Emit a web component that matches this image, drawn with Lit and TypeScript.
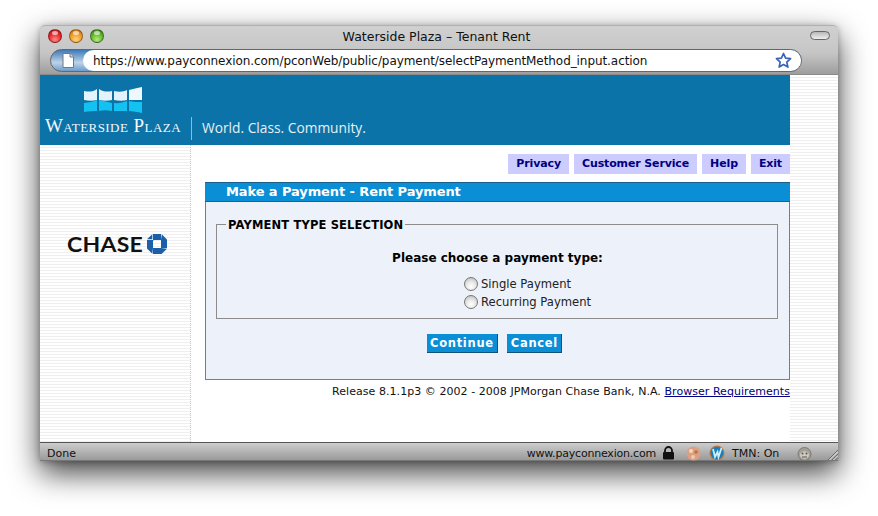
import { LitElement, html, css } from "lit";
import { customElement } from "lit/decorators.js";

const stripes = css`repeating-linear-gradient(180deg,#ffffff 0 2px,#efefef 2px 3px)`;

@customElement("app-root")
export class AppRoot extends LitElement {
  static styles = css`
    :host { display:block; width:878px; height:516px; background:#fff; overflow:hidden;
      font-family:"DejaVu Sans",sans-serif; color:#000; }
    .stage { padding:25px 40px 55px; box-sizing:border-box; height:516px; }
    .window { height:436px; display:flex; flex-direction:column; border-radius:5px 5px 0 0;
      box-shadow:0 12px 30px rgba(0,0,0,.75), 0 1px 6px rgba(0,0,0,.25); }
    .chrome { height:50px; flex:none; box-sizing:border-box; position:relative; border-radius:5px 5px 0 0;
      background:linear-gradient(180deg,#d0d0d0 0,#c8c8c8 22px,#c4c4c4 28px,#9c9c9c 49px);
      border-top:1px solid #b0b0b0; border-bottom:1px solid #8a8a8a; padding-top:1px; }
    .titlerow { height:18px; display:flex; align-items:center; padding:0 8px; position:relative; }
    .lights { display:flex; gap:7px; }
    .light { width:14px; height:14px; border-radius:50%; box-sizing:border-box; border:1px solid rgba(0,0,0,.35); position:relative; }
    .light::after { content:""; position:absolute; left:3px; right:3px; top:1px; height:4px; border-radius:50%; background:rgba(255,255,255,.6); }
    .red { background:radial-gradient(circle at 50% 80%,#ff8a80 0,#e8262c 55%,#a81a20 100%); }
    .amber { background:radial-gradient(circle at 50% 80%,#ffd27a 0,#ef9a26 55%,#b86a14 100%); }
    .green { background:radial-gradient(circle at 50% 80%,#b5ec78 0,#5fb52c 55%,#3c7f1c 100%); }
    .hidden { visibility:hidden; }
    .title { flex:1; text-align:center; font-size:12.5px; color:#111; padding-right:5px; }
    .pill { position:absolute; right:8px; top:4px; width:20px; height:9px; box-sizing:border-box; border-radius:5px; border:1px solid #666;
      background:linear-gradient(180deg,#b8b8b8,#eeeeee); }
    .urlrow { margin:4px 36px 0 10px; height:23px; display:flex; position:relative; border-radius:12px;
      background:linear-gradient(180deg,#3f79b8,#bcd3ea 60%,#6d9ccb); border:1px solid #666; box-sizing:border-box; }
    .page { width:32px; flex:none; display:flex; align-items:center; justify-content:center; padding-left:2px; box-sizing:border-box; }
    .field { flex:1; background:#fff; border-radius:11px; display:flex; align-items:center; padding-left:10px;
      font-size:12px; color:#111; letter-spacing:-.07px; justify-content:space-between; padding-right:9px; }
    .star { display:block; }
    .content { flex:1; display:grid; grid-template-columns:151px 1fr 48px; grid-template-rows:70px 1fr; background:#fff; min-height:0; }
    .brand { grid-column:1 / 3; background:#0c73a8; display:flex; position:relative; }
    .rightstrip { grid-row:1 / 3; grid-column:3; background:${stripes}; }
    .logo { width:151px; flex:none; display:flex; flex-direction:column; align-items:center; padding-top:12px; box-sizing:border-box; }
    .logo svg { margin-left:-6px; display:block; }
    .wname { font-family:"Liberation Serif",serif; color:#f4f8fb; font-size:19px; margin-top:3px; font-variant:small-caps; letter-spacing:.45px; white-space:nowrap; line-height:20px; margin-left:-5px; }
    .tag { align-self:flex-end; color:#e6f1f7; font-family:"Open Sans",sans-serif; font-size:13.75px; line-height:20px; padding:0 0 7px 11px; position:relative; }
    .tag::before { content:""; position:absolute; left:0; top:-1px; height:23px; width:1px; background:#8dbdd6; }
    .side { background:${stripes}; border-right:1px dotted #c8c8c8; box-sizing:border-box; display:flex; justify-content:flex-start; align-items:flex-start; padding:89px 0 0 27px; }
    .chase { font-family:"Lato","DejaVu Sans",sans-serif; font-weight:700; font-size:20.5px; color:#111; letter-spacing:.25px; line-height:20px; display:inline-block; width:80px; transform:scaleX(1.12); transform-origin:left; }
    .main { padding:9px 0 0 14px; display:flex; flex-direction:column; min-width:0; }
    .nav { display:flex; justify-content:flex-end; gap:5px; }
    .nav a { background:#ccccff; color:#000080; font-weight:700; font-size:11px; line-height:20px; padding:0 8px; white-space:nowrap; letter-spacing:-.13px; }
    .panel { margin-top:8px; height:198px; box-sizing:border-box; border:1px solid #6f7f8c; background:#edf1f9; display:flex; flex-direction:column; }
    .phead { background:#0a8ed6; color:#fff; font-weight:700; font-size:13px; line-height:18px; padding-left:21px; border-bottom:1px solid #1c5f88; flex:none; box-sizing:border-box; margin:-1px -1px 0; border-top:1px solid #1c5f88; height:20px; letter-spacing:-.1px; }
    fieldset { margin:14px 11px 0 10px; padding:0; height:103px; box-sizing:border-box; border:1px solid #8c8c8c; text-align:center; }
    legend { font-weight:700; font-size:11.5px; padding:2px 2px 0 2px; margin-left:9px; text-align:left; line-height:14px; letter-spacing:.15px; }
    .q { font-weight:700; font-size:12px; line-height:16px; margin-top:18px; margin-left:1px; }
    .opts { display:flex; flex-direction:column; align-items:flex-start; margin:10px 0 0 247px; gap:2px; }
    .opt { display:flex; align-items:center; gap:3px; font-size:11.6px; line-height:16px; color:#222; }
    .radio { width:14px; height:14px; border-radius:50%; box-sizing:border-box; border:1px solid #777;
      background:radial-gradient(circle at 50% 70%,#fff 0,#e8e8e8 45%,#b4b4b4 100%); }
    .btns { display:flex; justify-content:center; gap:9px; margin-top:15px; margin-left:-6px; }
    .btn { background:#0a8ed6; color:#fff; font-weight:700; font-size:11.5px; line-height:18px; height:19px; box-sizing:border-box;
      padding:0 3.5px; letter-spacing:.7px; border-bottom:1px solid #14507a; border-right:1px solid #14507a; }
    .foot { text-align:right; font-size:11px; line-height:14px; margin-top:5px; color:#111; white-space:nowrap; letter-spacing:.05px; }
    .foot a { color:#000080; text-decoration:underline; }
    .status { height:19px; flex:none; box-sizing:border-box; border-top:1px solid #555; border-bottom:1px solid #777;
      background:linear-gradient(180deg,#cdcdcd,#9a9a9a); display:flex; align-items:center; font-size:11px; color:#111; padding:3px 0 0 7px; position:relative; }
    .done { flex:1; }
    .site { letter-spacing:-.2px; }
    .sicon { display:block; flex:none; }
    .lock { margin-left:6px; }
    .peach { margin-left:11px; }
    .wave { margin-left:8px; }
    .monkey { margin-right:26px; }
    .grip { position:absolute; right:0; bottom:0; }
    .tmn { margin-left:7px; width:65px; }
  `;

  render() {
    return html`<div class="stage"><div class="window">
      <div class="chrome">
        <div class="titlerow">
          <div class="lights"><div class="light red"></div><div class="light amber"></div><div class="light green"></div></div>
          <div class="title">Waterside Plaza – Tenant Rent</div>
          <div class="lights hidden"><div class="light"></div><div class="light"></div><div class="light"></div></div>
          <div class="pill"></div>
        </div>
        <div class="urlrow">
          <div class="page"><svg width="12" height="15" viewBox="0 0 12 15"><path d="M1 .5H8L11.5 4V14.5H1Z" fill="#fff" stroke="#777"/><path d="M8 .5V4H11.5" fill="#ddd" stroke="#777"/></svg></div>
          <div class="field"><span>https://www.payconnexion.com/pconWeb/public/payment/selectPaymentMethod_input.action</span>
            <svg class="star" width="17" height="17" viewBox="0 0 17 17"><path d="M8.500 1.500l2.100 4.700 5 .5-3.800 3.400 1.100 5-4.400-2.600-4.400 2.600 1.100-5L1.400 6.700l5-.5z" fill="#fff" stroke="#3a62b8" stroke-width="1.700" stroke-linejoin="round"/></svg>
          </div>
        </div>
      </div>
      <div class="content">
        <div class="brand">
          <div class="logo">
            <svg width="60" height="26" viewBox="0 0 60 26">
              <path d="M1 4C6 5 10 5 14 2V13C10 14 6 14 1 13Z" fill="#e4f2fb"/>
              <path d="M16 2C20 5 25 5 29 4V13C25 14 20 14 16 13Z" fill="#e4f2fb"/>
              <path d="M31 4C36 5 40 5 44 3V13C40 14 36 14 31 13Z" fill="#e4f2fb"/>
              <path d="M46 3C50 2 54 1 59 0V13C54 13 50 13 46 13Z" fill="#eef7fc"/>
              <path d="M1 16C6 15 10 15 14 13V24C10 24 6 24 1 25Z" fill="#14c2f2"/>
              <path d="M16 13C20 14 25 15 29 16V24C25 23 20 23 16 24Z" fill="#14c2f2"/>
              <path d="M31 16C36 17 40 15 44 14V24C40 24 36 24 31 24Z" fill="#14c2f2"/>
              <path d="M46 14C50 15 54 15 59 15V26C54 25 50 24 46 24Z" fill="#14c2f2"/>
            </svg>
            <div class="wname">Waterside Plaza</div>
          </div>
          <div class="tag">World. Class. Community.</div>
        </div>
        <div class="rightstrip"></div>
        <div class="side">
          <span class="chase">CHASE</span>
          <svg width="20" height="20" viewBox="0 0 20 20">
            <path d="M6 0H14V6H7V6.800L6 6Z" fill="#1b5fa8"/>
            <path d="M14.800 0.300L20 5.500V14H14V6Z" fill="#1b5fa8"/>
            <path d="M20 14.800L14.500 20H6V14H14Z" fill="#1b5fa8"/>
            <path d="M5.300 19.700L0 14.500V6H6V14Z" fill="#1b5fa8"/>
            <path d="M5.300 .3L0 5.300H5.300Z" fill="#1b5fa8"/>
          </svg>
        </div>
        <div class="main">
          <div class="nav"><a>Privacy</a><a>Customer Service</a><a>Help</a><a>Exit</a></div>
          <div class="panel">
            <div class="phead">Make a Payment - Rent Payment</div>
            <fieldset>
              <legend>PAYMENT TYPE SELECTION</legend>
              <div class="q">Please choose a payment type:</div>
              <div class="opts">
                <div class="opt"><div class="radio"></div>Single Payment</div>
                <div class="opt"><div class="radio"></div>Recurring Payment</div>
              </div>
            </fieldset>
            <div class="btns"><div class="btn">Continue</div><div class="btn">Cancel</div></div>
          </div>
          <div class="foot">Release 8.1.1p3 © 2002 - 2008 JPMorgan Chase Bank, N.A. <a>Browser Requirements</a></div>
        </div>
      </div>
      <div class="status">
        <div class="done">Done</div>
        <div class="site">www.payconnexion.com</div>
        <svg class="sicon lock" width="13" height="14" viewBox="0 0 13 14"><path d="M3 7V4.500a3.500 3.500 0 0 1 7 0V7" fill="none" stroke="#111" stroke-width="1.800"/><rect x="1" y="6" width="11" height="7.500" rx="1" fill="#111"/></svg>
        <svg class="sicon peach" width="15" height="15" viewBox="0 0 15 15"><circle cx="7.500" cy="7.500" r="7" fill="#dca080"/><circle cx="5" cy="5" r="2" fill="#f2d6c2"/><circle cx="10" cy="6" r="1.800" fill="#b9734f"/><circle cx="7" cy="11" r="2" fill="#f0c8ae"/></svg>
        <svg class="sicon wave" width="16" height="16" viewBox="0 0 16 16"><circle cx="8" cy="8" r="7.500" fill="#b9794a"/><circle cx="8" cy="8" r="6.300" fill="#1a7fb8"/><path d="M4 4L6 12L8.500 7L9.500 12L12.500 3" fill="none" stroke="#cfeefc" stroke-width="1.800"/></svg>
        <div class="tmn">TMN: On</div>
        <svg class="sicon monkey" width="15" height="15" viewBox="0 0 15 15"><circle cx="7.500" cy="8" r="6.500" fill="#a49f96" stroke="#7e7a72"/><ellipse cx="7.500" cy="9" rx="4.500" ry="3.800" fill="#cfcac0"/><circle cx="5.500" cy="7.500" r="1" fill="#555"/><circle cx="9.500" cy="7.500" r="1" fill="#555"/><path d="M5 11h5" stroke="#555"/></svg>
        <svg class="grip" width="11" height="11" viewBox="0 0 11 11"><path d="M11 1L1 11M11 5L5 11M11 8.500L8.500 11" stroke="#6b6b6b" fill="none"/><path d="M11 2.500L2.500 11M11 6.500L6.500 11" stroke="#e4e4e4" fill="none"/></svg>
      </div>
    </div></div>`;
  }
}
